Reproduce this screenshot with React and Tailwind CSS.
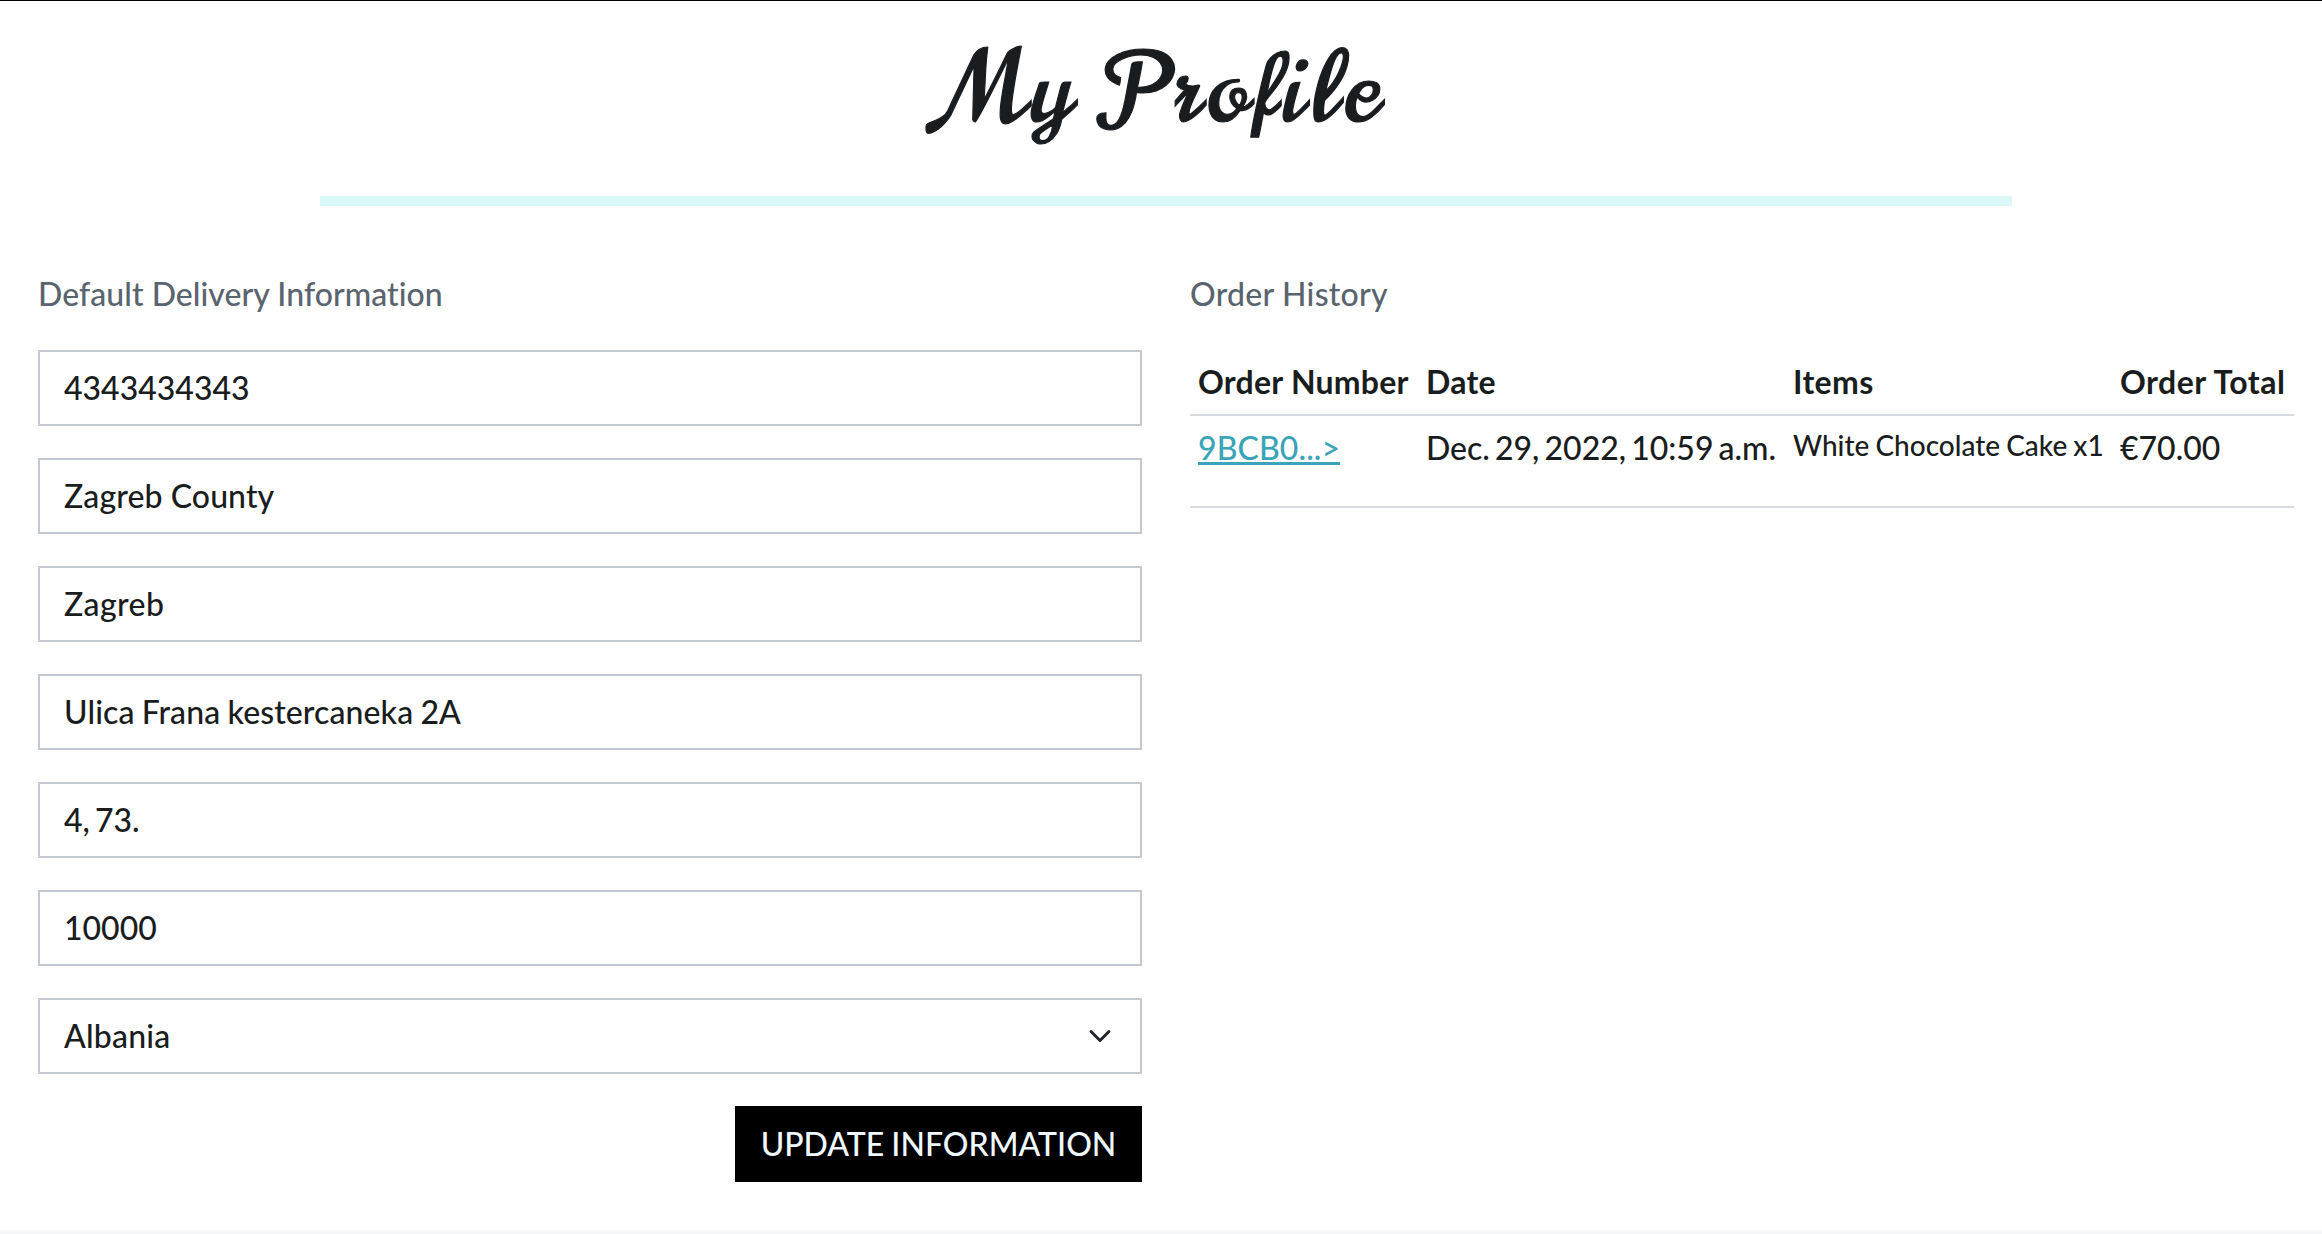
import React from "react";

const fields = [
  { value: "4343434343", tracking: "" },
  { value: "Zagreb County", tracking: "tracking-[0.1px]" },
  { value: "Zagreb", tracking: "tracking-[0.4px]" },
  { value: "Ulica Frana kestercaneka 2A", tracking: "tracking-[0.1px] [word-spacing:-1px]" },
  { value: "4, 73.", tracking: "[word-spacing:-3px]" },
  { value: "10000", tracking: "" },
];

function Field({ value, tracking }) {
  return (
    <input
      type="text"
      readOnly
      value={value}
      className={`block h-[76px] w-full border-2 border-[#c3c8d1] bg-white px-6 pb-[2px] outline-none ${tracking}`}
    />
  );
}

function CountrySelect() {
  return (
    <div className="flex h-[76px] items-center justify-between border-2 border-[#c3c8d1] bg-white px-6">
      <span className="tracking-[0.2px]">Albania</span>
      <svg viewBox="0 0 16 16" className="h-6 w-8" fill="none">
        <path d="m2 5 6 6 6-6" stroke="#212529" strokeWidth="2" strokeLinecap="round" strokeLinejoin="round" />
      </svg>
    </div>
  );
}

export default function App() {
  return (
    <div className="flex h-[1234px] flex-col overflow-hidden border-t border-black bg-white font-['Lato',sans-serif] text-[32px] leading-[48px] font-medium text-[#1a1d20] [font-variant-ligatures:none]">
      <header className="flex h-[205px] shrink-0 flex-col items-center justify-between">
        <h1 className="mt-[27px] ml-[9px] font-['Norican','Liberation_Serif',cursive] text-[96px] leading-[125px] font-normal tracking-[6.3px] whitespace-nowrap [-webkit-text-stroke:1.2px_#1a1d20]">
          My Profile
        </h1>
        <div className="ml-[10px] h-[10px] w-[1692px] bg-[#d9f8f7]" />
      </header>

      <main className="grid grow grid-cols-[1104px_1104px] gap-12 pt-[64px] pl-[38px]">
        <section>
          <p className="mb-8 tracking-[0.05px] text-[#5a646e]">Default Delivery Information</p>
          <form className="flex flex-col gap-8">
            {fields.map((field) => (
              <Field key={field.value} {...field} />
            ))}
            <CountrySelect />
            <button
              type="button"
              className="h-[76px] w-[407px] self-end bg-black text-center whitespace-nowrap text-[#f0f8ff] [word-spacing:-1px]"
            >
              UPDATE INFORMATION
            </button>
          </form>
        </section>

        <section>
          <p className="mb-8 tracking-[0.25px] text-[#5a646e]">Order History</p>
          <table className="w-full table-fixed border-collapse text-left whitespace-nowrap">
            <colgroup>
              <col className="w-[228px]" />
              <col className="w-[367px]" />
              <col className="w-[327px]" />
              <col className="w-[182px]" />
            </colgroup>
            <thead>
              <tr className="h-[65px] border-b-2 border-[#d7dade] [&>th]:px-2 [&>th]:pb-px [&>th]:font-bold">
                <th className="tracking-[0.25px]">Order Number</th>
                <th className="tracking-[0.25px]">Date</th>
                <th className="tracking-[0.4px]">Items</th>
                <th className="tracking-[0.5px]">Order Total</th>
              </tr>
            </thead>
            <tbody>
              <tr className="h-[92px] border-b-2 border-[#d7dade] align-top [&>td]:px-2 [&>td]:pt-2">
                <td>
                  <a
                    href="#order"
                    className="tracking-[0.1px] text-[#3ba4b8] underline decoration-[3px] underline-offset-2 [text-decoration-skip-ink:none]"
                  >
                    9BCB0...&gt;
                  </a>
                </td>
                <td className="[word-spacing:-3px]">Dec. 29, 2022, 10:59 a.m.</td>
                <td className="text-[28px] leading-[42px] [word-spacing:-1px]">White Chocolate Cake x1</td>
                <td>€70.00</td>
              </tr>
            </tbody>
          </table>
        </section>
      </main>
      <footer className="h-1 shrink-0 bg-[#f5f7f9]" />
    </div>
  );
}
